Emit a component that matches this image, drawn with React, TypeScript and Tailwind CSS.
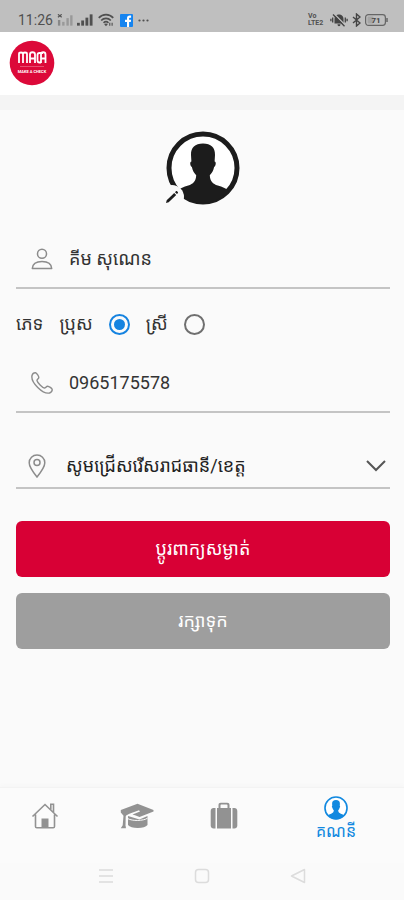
import React, { useState } from 'react';

const FONT = "font-['Roboto','Noto_Sans_Khmer','Noto_Sans','Khmer_OS',sans-serif]";

const SignalIcon: React.FC<{ className: string }> = ({ className }) => (
  <svg viewBox="0 0 17 12" className={className} fill="currentColor" aria-hidden="true">
    <rect x="0" y="9" width="3" height="3" />
    <rect x="4.5" y="6.5" width="3" height="5.5" />
    <rect x="9" y="3.5" width="3" height="8.5" />
    <rect x="13.5" y="0" width="3" height="12" />
  </svg>
);

const WeakSignalIcon: React.FC = () => (
  <svg viewBox="0 0 17 12" className="h-3 w-4" fill="#999" aria-hidden="true">
    <path d="M1 0l4 3M5 0L1 3" stroke="#555" strokeWidth="1.3" />
    <rect x="1" y="6" width="2.5" height="6" fill="#888" />
    <rect x="5.5" y="8" width="2.5" height="4" />
    <rect x="10" y="4" width="2.5" height="8" />
    <rect x="14" y="1" width="2.5" height="11" />
  </svg>
);

const StatusBar: React.FC = () => (
  <div className="flex h-8 items-end justify-between bg-[#bfbfbf] pr-4 pb-1 pl-[18px] text-[#505050]">
    <div className="flex h-4 items-center gap-1">
      <span className="text-sm leading-4">11:26</span>
      <WeakSignalIcon />
      <SignalIcon className="h-3 w-4" />
      <svg viewBox="0 0 17 14" className="ml-px h-[14px] w-4" fill="none" stroke="currentColor" strokeWidth="1.8" aria-hidden="true">
        <path d="M.8 4.7C5 .1 12 .1 16.2 4.7M3.4 7.5c2.800-2.900 7.400-2.900 10.200 0M5.900 10c1.500-1.400 3.700-1.400 5.200 0" />
        <path d="M8.5 13.6l-1.900-2.100c1-.9 2.800-.9 3.800 0z" fill="currentColor" stroke="none" />
        <path d="M12.5 13v-3M15 10v3" strokeWidth="1.2" />
      </svg>
      <svg viewBox="0 0 13 13" className="ml-0.5 size-[13px]" aria-hidden="true">
        <rect width="13" height="13" rx="1" fill="#1584f0" />
        <path d="M7 13V8H5V5.8h2V4.3C7 2.500 8 1.600 9.600 1.600h1.500v2.100h-1c-.7 0-1 .3-1 1v1.100h2L10.800 8H9.100v5z" fill="#fff" />
      </svg>
      <svg viewBox="0 0 11 3" className="ml-px h-[3px] w-[11px]" fill="currentColor" aria-hidden="true">
        <circle cx="1.5" cy="1.5" r="1.1" />
        <circle cx="5.5" cy="1.5" r="1.1" />
        <circle cx="9.5" cy="1.5" r="1.1" />
      </svg>
    </div>
    <div className="flex h-4 items-center gap-1">
      <div className="w-[18px] text-[7px] leading-[7px] font-bold">
        <div>Vo</div>
        <div>LTE2</div>
      </div>
      <svg viewBox="0 0 18 14" className="h-[14px] w-[18px]" aria-hidden="true">
        <path d="M4.500 10.500V6c0-2.600 1.700-4.300 3.600-4.600h1.800c2 .3 3.600 2 3.600 4.600v4.500zM7.500 11.300h3c0 1.200-.7 1.900-1.500 1.900s-1.500-.7-1.500-1.900z" fill="#444" />
        <path d="M4.300 1l11.500 11.800" stroke="#bfbfbf" strokeWidth="1.400" />
        <path d="M3 1.500l11.500 11.800M2.700 4.500v5M.9 5.800v2.400M15.300 4.500v5M17.100 5.800v2.400" stroke="#444" strokeWidth="1.3" />
      </svg>
      <svg viewBox="0 0 9 14" className="h-[14px] w-[9px]" fill="none" stroke="#444" strokeWidth="1.4" aria-hidden="true">
        <path d="M1 4l7 6-3.500 3V1L8 4l-7 6" />
      </svg>
      <svg viewBox="0 0 23 12" className="h-3 w-[23px]" fill="none" stroke="#666" aria-hidden="true">
        <rect x=".6" y=".6" width="19.8" height="10.8" rx="2.8" strokeWidth="1.2" />
        <path d="M22 4v4" strokeWidth="1.5" />
        <rect x="2.5" y="2.5" width="6" height="7" rx="1" fill="#a5a5a5" stroke="none" />
        <text x="11" y="8.8" textAnchor="middle" fontSize="8" fontWeight="700" fill="#444" stroke="none">71</text>
      </svg>
    </div>
  </div>
);

const Logo: React.FC = () => (
  <svg viewBox="0 0 46 46" className="size-[46px]" role="img" aria-label="MACA">
    <circle cx="23" cy="23" r="22.3" fill="#dc0939" />
    <g fill="none" stroke="#fff" strokeWidth="1.8" strokeLinejoin="round">
      <path d="M10 23v-9c0-2 4-2 4 0v9M14 14c0-2 4-2 4 0v9" />
      <path d="M21 23v-8.500c0-3 5-3 5 0V23M21 18.500h5" />
      <path d="M34 13h-3.500c-1.500 0-2 .7-2 2v5.500c0 1.500.7 2 2 2H32" />
      <path d="M32 23v-8.500c0-3 4.500-3 4.500 0V23M32 18.500h4.500" />
    </g>
    <path d="M11 26.500h24" stroke="#ef7d96" strokeWidth=".6" />
    <text x="23" y="32.5" textAnchor="middle" fontSize="4" fontWeight="700" fill="#fff">MAKE A CHECK</text>
  </svg>
);

// Head and shoulders inside a ring, drawn in the current text colour
const Portrait: React.FC<{ className: string }> = ({ className }) => (
  <svg viewBox="0 0 74 74" className={className} aria-hidden="true">
    <circle cx="37" cy="37" r="34" fill="#fff" stroke="currentColor" strokeWidth="5" />
    <path
      d="M37 12.500c-8 0-12.200 4-12 11.500l.4 6.500c-1.800.2-1.400 4.300.5 5.500.6 3.600 2.300 6.200 4.300 8.200-.3 6.300-3 8.600-8 10.300-4.500 1.500-8.200 2.700-10.700 5C18 67 27 72 37 72s19-5 25.500-12.500c-2.500-2.300-6.200-3.500-10.700-5-5-1.700-7.700-4-8-10.300 2-2 3.700-4.600 4.300-8.200 1.900-1.200 2.300-5.300.5-5.500L49 24c.2-7.500-4-11.500-12-11.500z"
      fill="currentColor"
    />
  </svg>
);

interface TextFieldProps {
  id: string;
  label: string;
  type: string;
  value: string;
  onChange: (value: string) => void;
  icon: React.ReactNode;
}

const TextField: React.FC<TextFieldProps> = ({ id, label, type, value, onChange, icon }) => (
  <div className="flex h-[58px] items-center gap-4 border-b-2 border-[#c4c4c4] pl-[15px]">
    <label htmlFor={id} aria-label={label} className="text-[#8c8c8c]">
      {icon}
    </label>
    <input
      id={id}
      type={type}
      value={value}
      onChange={(e) => onChange(e.target.value)}
      className="min-w-0 flex-1 bg-transparent text-lg leading-7 text-[#333] outline-none"
    />
  </div>
);

const genders = [
  { id: 'male', label: 'ប្រុស' },
  { id: 'female', label: 'ស្រី' }
];

const BottomNav: React.FC = () => (
  <nav className="grid h-[76px] grid-cols-[45fr_47fr_40fr_70fr] border-t border-[#f3f3f3] bg-[#fbfbfb] text-[#929292] shadow-[0_-2px_5px_rgba(0,0,0,0.02)]">
    <a href="#home" aria-label="Home" className="flex justify-center pt-[15px]">
      <svg viewBox="0 0 28 26" className="h-[26px] w-7" fill="none" stroke="currentColor" strokeWidth="1.6">
        <path d="M1.500 13.500L14 1.500l12.500 12M4.500 11.500v12c0 .8.500 1.300 1.300 1.300h16.400c.8 0 1.300-.5 1.300-1.300v-12M19.800 6.500V1.300h2.700v8" />
        <path d="M10.500 24.500v-9h7v9z" fill="currentColor" stroke="none" />
      </svg>
    </a>
    <a href="#courses" aria-label="Courses" className="flex justify-center pt-[15px]">
      <svg viewBox="0 0 34 26" className="h-[26px] w-[34px]" fill="currentColor">
        <path d="M17.500.7L33.500 7v1.500L19.500 14c-2.500-1-5-2-7-2.500l7.500-3-1-1.300-9 3.300c-2.300 1-4 1.700-4.300 3l-.2 9.500c.5.700.5 1.500.3 2.200H.8l1.900-3 .8-9.500L.8 9.500V7z" />
        <path d="M8 13l11.500 3.500L27.500 13v9c-1.500 2-5 3-9.700 3S9.500 24 8 22z" />
        <path d="M8 15.700c4 2.400 15.500 2.400 19.500-.5" fill="none" stroke="#fbfbfb" />
      </svg>
    </a>
    <a href="#jobs" aria-label="Jobs" className="flex justify-center pt-[14px]">
      <svg viewBox="0 0 28 27" className="h-[27px] w-7" fill="currentColor">
        <path d="M5.500 6v20.500H3.500C2 26.500.7 25.300.7 23.700V9C.7 7.300 2 6 3.500 6zM22.500 6v20.500h2c1.500 0 2.800-1.200 2.800-2.800V9c0-1.700-1.300-3-2.800-3z" />
        <path d="M7 6h1.500V3C8.500 1.500 9.300.7 10.800.7h6.400c1.500 0 2.300.8 2.300 2.300v3H21v20.500H7zM10.500 3.200V6h7V3.200c0-.5-.2-.7-.7-.7h-5.600c-.5 0-.7.2-.7.700z" fillRule="evenodd" />
      </svg>
    </a>
    <a href="#account" aria-current="page" className="flex flex-col items-center pt-2 pl-1 text-[#1289e0]">
      <Portrait className="size-6" />
      <span className="text-base leading-6">គណនី</span>
    </a>
  </nav>
);

const SystemNav: React.FC = () => (
  <div className="flex h-[37px] items-center justify-between bg-[#fafafa] px-[98px] pb-3 text-[#dcdcdc]">
    <button type="button" aria-label="Recent apps">
      <svg viewBox="0 0 16 16" className="size-4" stroke="currentColor" strokeWidth="1.5">
        <path d="M1 2h14M1 8h14M1 14h14" />
      </svg>
    </button>
    <button type="button" aria-label="Home screen">
      <svg viewBox="0 0 16 16" className="size-4" fill="none" stroke="currentColor" strokeWidth="1.5">
        <rect x="1.5" y="1.5" width="13" height="13" rx="3" />
      </svg>
    </button>
    <button type="button" aria-label="Back">
      <svg viewBox="0 0 16 16" className="size-4" fill="none" stroke="currentColor" strokeWidth="1.5" strokeLinejoin="round">
        <path d="M14.500 1.500v13L1.500 8z" />
      </svg>
    </button>
  </div>
);

const App: React.FC = () => {
  const [name, setName] = useState('គីម សុណេន');
  const [phone, setPhone] = useState('0965175578');
  const [gender, setGender] = useState('male');

  return (
    <div className={`flex min-h-screen flex-col bg-[#fafafa] text-[#333] ${FONT}`}>
      <StatusBar />
      <header className="h-[78px] border-b-[15px] border-[#f4f4f4] bg-white pt-2 pl-[9px]">
        <Logo />
      </header>

      <main className="flex flex-1 flex-col pr-3.5 pb-4 pl-4">
        <div className="relative mx-auto mt-[21px] size-[74px]">
          <Portrait className="size-[74px] text-[#1c1c1c]" />
          <button
            type="button"
            aria-label="Edit photo"
            className="absolute -bottom-1 -left-1.5 flex size-6 items-center justify-center rounded-full bg-[#fafafa]"
          >
            <svg viewBox="0 0 14 14" className="size-[14px]" fill="#1c1c1c">
              <path d="M1 13l.7-2.800 7.500-7.300 2 2-7.500 7.300zM10 2.200l.9-.9c.4-.4.8-.4 1.200 0l.7.700c.4.4.4.8 0 1.200l-.9.900z" />
            </svg>
          </button>
        </div>

        <form className="flex flex-col pt-[26px]" onSubmit={(e) => e.preventDefault()}>
          <TextField
            id="name"
            label="ឈ្មោះ"
            type="text"
            value={name}
            onChange={setName}
            icon={
              <svg viewBox="0 0 22 22" className="size-[22px]" fill="none" stroke="currentColor" strokeWidth="1.5">
                <circle cx="11" cy="5.8" r="4.5" />
                <path d="M1.300 20.500c.3-4.500 3.500-7 9.700-7s9.400 2.500 9.700 7z" strokeLinejoin="round" />
              </svg>
            }
          />

          <div role="radiogroup" aria-labelledby="gender-label" className="flex h-[66px] items-center gap-4 pt-1 text-lg leading-7">
            <span id="gender-label">ភេទ</span>
            {genders.map((option) => (
              <label key={option.id} className="flex items-center gap-4">
                {option.label}
                <input
                  type="radio"
                  name="gender"
                  value={option.id}
                  checked={gender === option.id}
                  onChange={() => setGender(option.id)}
                  className="size-[21px] appearance-none rounded-full border-2 border-[#6f6f6f] checked:border-[#1583e0] checked:bg-[#1583e0] checked:bg-clip-content checked:p-[3px]"
                />
              </label>
            ))}
          </div>

          <TextField
            id="phone"
            label="លេខទូរស័ព្ទ"
            type="tel"
            value={phone}
            onChange={setPhone}
            icon={
              <svg viewBox="0 0 22 22" className="size-[22px]" fill="none" stroke="currentColor" strokeWidth="1.4" strokeLinejoin="round">
                <path d="M1 3.500C1.500 2 3.300.700 4.500.800c1.200.2 3.200 3.200 3.300 4.600.1 1.300-2 2.100-1.800 3.200.4 2 5.400 7 7.400 7.400 1.100.2 1.900-1.900 3.200-1.800 1.400.1 4.400 2.100 4.600 3.300.1 1.200-1.200 3-2.700 3.500C12 22.500-.5 10.500 1 3.500z" />
              </svg>
            }
          />

          <div className="mt-8 flex h-11 items-center border-b-2 border-[#c4c4c4] pl-3">
            <label htmlFor="province" aria-label="រាជធានី/ខេត្ត" className="text-[#8c8c8c]">
              <svg viewBox="0 0 18 24" className="h-6 w-[18px]" fill="none" stroke="currentColor" strokeWidth="1.5">
                <path d="M9 23C4.500 17.500 1.200 13 1.200 8.800 1.200 4.300 4.700 1 9 1s7.800 3.300 7.800 7.800c0 4.200-3.300 8.700-7.800 14.200z" />
                <circle cx="9" cy="8.5" r="3" />
              </svg>
            </label>
            <div className="relative ml-5 flex-1">
              <select id="province" className="w-full appearance-none bg-transparent text-lg leading-8 text-[#222] outline-none">
                <option>សូមជ្រើសរើសរាជធានី/ខេត្ត</option>
              </select>
              <svg viewBox="0 0 20 12" className="pointer-events-none absolute top-2.5 right-1 h-3 w-5" fill="none" stroke="#555" strokeWidth="2">
                <path d="M1 1l9 9 9-9" />
              </svg>
            </div>
          </div>

          <button type="button" className="mt-8 h-14 rounded-md bg-[#d80035] text-lg leading-7 text-white">
            ប្តូរពាក្យសម្ងាត់
          </button>
          <button type="submit" className="mt-4 h-14 rounded-md bg-[#9e9e9e] text-lg leading-7 text-white">
            រក្សាទុក
          </button>
        </form>
      </main>

      <BottomNav />
      <SystemNav />
    </div>
  );
};

export default App;
